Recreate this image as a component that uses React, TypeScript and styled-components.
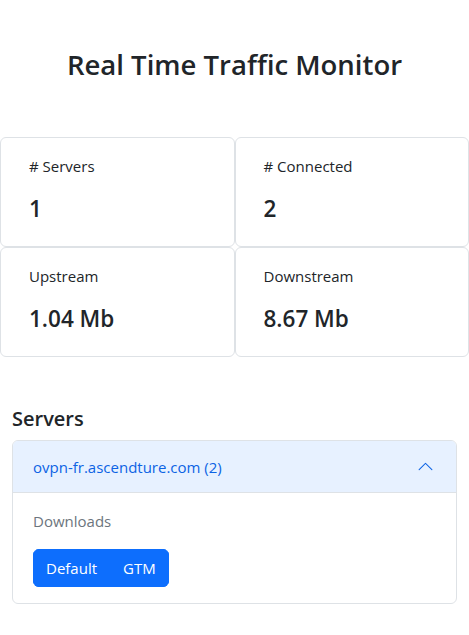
import styled, { createGlobalStyle } from 'styled-components';

const GlobalStyle = createGlobalStyle`
  body {
    margin: 0;
    font-family: "Open Sans", "Noto Sans", sans-serif;
    color: #212529;
    background: #fff;
  }
  * {
    box-sizing: border-box;
  }
`;

const ScPage = styled.div`
  width: 469px;
`;

const ScTitle = styled.h1`
  margin: 0;
  padding: 47px 0 55px;
  text-align: center;
  font-size: 27.5px;
  font-weight: 600;
  line-height: 35px;
`;

const ScStatGrid = styled.div`
  display: grid;
  grid-template-columns: 1fr 1fr;
`;

const ScStatCard = styled.div`
  border: 1px solid #dee2e6;
  border-radius: 6px;
  padding: 16px 28px;
  height: 110px;
`;

const ScStatLabel = styled.p`
  margin: 0 0 17px;
  font-size: 15px;
  line-height: 24px;
`;

const ScStatValue = styled.h3`
  margin: 0;
  font-size: 22.5px;
  font-weight: 600;
  line-height: 1.2;
`;

const ScServers = styled.section`
  padding: 50px 12px 0;
`;

const ScSectionTitle = styled.h4`
  margin: 0 0 9px;
  font-size: 20px;
  font-weight: 600;
  line-height: 24px;
`;

const ScAccordion = styled.div`
  border: 1px solid #dee2e6;
  border-radius: 6px;
  overflow: hidden;
`;

const ScAccordionHeader = styled.button`
  display: flex;
  align-items: center;
  justify-content: space-between;
  width: 100%;
  padding: 13.5px 20px;
  border: 0;
  border-bottom: 1px solid #dee2e6;
  background: #e7f1ff;
  color: #0c63e4;
  font: inherit;
  font-size: 15px;
  line-height: 24px;
  text-align: left;
  cursor: pointer;
`;

const ScChevron = styled.svg`
  width: 17px;
  height: 17px;
  margin-right: 2px;
  fill: #0c63e4;
  transform: rotate(180deg);
`;

const ScAccordionBody = styled.div`
  padding: 16px 20px;
`;

const ScMuted = styled.p`
  margin: 0 0 16px;
  color: #6c757d;
  font-size: 15px;
  line-height: 24px;
`;

const ScButtonGroup = styled.div`
  display: inline-flex;
  border-radius: 6px;
  overflow: hidden;
`;

const ScButton = styled.button`
  padding: 6px 12px;
  border: 1px solid #0d6efd;
  background: #0d6efd;
  color: #fff;
  font: inherit;
  font-size: 15px;
  line-height: 24px;
  cursor: pointer;
`;

type Stat = { label: string; value: string };

const stats: Stat[] = [
  { label: '# Servers', value: '1' },
  { label: '# Connected', value: '2' },
  { label: 'Upstream', value: '1.04 Mb' },
  { label: 'Downstream', value: '8.67 Mb' },
];

export default function App() {
  return (
    <ScPage>
      <GlobalStyle />
      <ScTitle>Real Time Traffic Monitor</ScTitle>
      <ScStatGrid>
        {stats.map((s) => (
          <ScStatCard key={s.label}>
            <ScStatLabel>{s.label}</ScStatLabel>
            <ScStatValue>{s.value}</ScStatValue>
          </ScStatCard>
        ))}
      </ScStatGrid>
      <ScServers>
        <ScSectionTitle>Servers</ScSectionTitle>
        <ScAccordion>
          <ScAccordionHeader>
            <span>ovpn-fr.ascendture.com (2)</span>
            <ScChevron viewBox="0 0 16 16">
              <path
                fillRule="evenodd"
                d="M1.646 4.646a.5.5 0 0 1 .708 0L8 10.293l5.646-5.647a.5.5 0 0 1 .708.708l-6 6a.5.5 0 0 1-.708 0l-6-6a.5.5 0 0 1 0-.708z"
              />
            </ScChevron>
          </ScAccordionHeader>
          <ScAccordionBody>
            <ScMuted>Downloads</ScMuted>
            <ScButtonGroup>
              <ScButton>Default</ScButton>
              <ScButton>GTM</ScButton>
            </ScButtonGroup>
          </ScAccordionBody>
        </ScAccordion>
      </ScServers>
    </ScPage>
  );
}
